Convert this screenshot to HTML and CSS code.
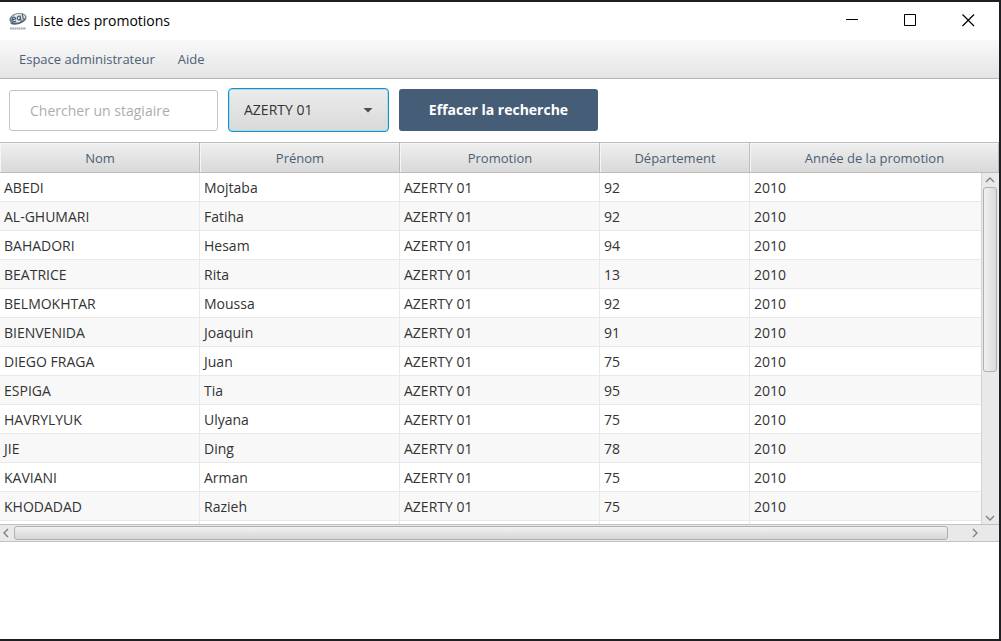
FILE: index.html
```html
<!DOCTYPE html>
<html lang="fr">
<head>
<meta charset="utf-8">
<meta name="viewport" content="width=device-width, initial-scale=1">
<title>Liste des promotions</title>
<link rel="stylesheet" href="styles.css">
</head>
<body>
<div class="window">
  <header class="titlebar">
    <svg class="logo" width="20" height="20" viewBox="0 0 20 20" aria-hidden="true">
      <g transform="rotate(-12 10 8)">
        <ellipse cx="10" cy="7.500" rx="8.800" ry="5.300" fill="#71808c"/>
        <ellipse cx="10.500" cy="7.300" rx="7" ry="4.200" fill="#e4e9ed"/>
        <path d="M4.500 7.500h3.200c.3-3-3.400-3-3.400.2 0 2.400 2.400 2.600 3.400 1.600M12.400 5.600c-3.400-1.400-4 3.800-1 3.600 1.200-.2 1.300-2 1.300-4v6M15.200 3.800v5.400" fill="none" stroke="#4a5e70" stroke-width="1.200"/>
        <path d="M2 10c3 3.500 11 3.500 15-1" fill="none" stroke="#4a5e70" stroke-width="1.300"/>
      </g>
      <path d="M2 17.500h16" stroke="#a4aab0" stroke-width="2" stroke-dasharray="1.800 .4"/>
    </svg>
    <h1 class="title">Liste des promotions</h1>
    <div class="window-buttons">
      <button class="window-button" aria-label="Réduire"><svg width="13" height="13" viewBox="0 0 13 13"><path d="M0 5.500h12" stroke="#000"/></svg></button>
      <button class="window-button" aria-label="Agrandir"><svg width="13" height="13" viewBox="0 0 13 13"><path d="M.5.500h11v11H.5z" fill="none" stroke="#000"/></svg></button>
      <button class="window-button" aria-label="Fermer"><svg width="13" height="13" viewBox="0 0 13 13"><path d="M.5.500l11.500 11.500M12 .5L.5 12" stroke="#000" stroke-width="1.200"/></svg></button>
    </div>
  </header>
  <nav class="menubar">
    <button class="menu">Espace administrateur</button>
    <button class="menu">Aide</button>
  </nav>
  <form class="toolbar">
    <input class="search" type="text" placeholder="Chercher un stagiaire" aria-label="Chercher un stagiaire">
    <div class="combo">
      <select class="combo-select" aria-label="Promotion"><option>AZERTY 01</option></select>
    </div>
    <button class="clear" type="button">Effacer la recherche</button>
  </form>
  <section class="listing">
    <div class="viewport">
      <table class="table">
        <colgroup><col class="col-wide"><col class="col-wide"><col class="col-wide"><col class="col-narrow"><col></colgroup>
        <thead><tr><th>Nom</th><th>Prénom</th><th>Promotion</th><th>Département</th><th>Année de la promotion</th></tr></thead>
        <tbody>
          <tr><td>ABEDI</td><td>Mojtaba</td><td>AZERTY 01</td><td>92</td><td>2010</td></tr>
          <tr><td>AL-GHUMARI</td><td>Fatiha</td><td>AZERTY 01</td><td>92</td><td>2010</td></tr>
          <tr><td>BAHADORI</td><td>Hesam</td><td>AZERTY 01</td><td>94</td><td>2010</td></tr>
          <tr><td>BEATRICE</td><td>Rita</td><td>AZERTY 01</td><td>13</td><td>2010</td></tr>
          <tr><td>BELMOKHTAR</td><td>Moussa</td><td>AZERTY 01</td><td>92</td><td>2010</td></tr>
          <tr><td>BIENVENIDA</td><td>Joaquin</td><td>AZERTY 01</td><td>91</td><td>2010</td></tr>
          <tr><td>DIEGO FRAGA</td><td>Juan</td><td>AZERTY 01</td><td>75</td><td>2010</td></tr>
          <tr><td>ESPIGA</td><td>Tia</td><td>AZERTY 01</td><td>95</td><td>2010</td></tr>
          <tr><td>HAVRYLYUK</td><td>Ulyana</td><td>AZERTY 01</td><td>75</td><td>2010</td></tr>
          <tr><td>JIE</td><td>Ding</td><td>AZERTY 01</td><td>78</td><td>2010</td></tr>
          <tr><td>KAVIANI</td><td>Arman</td><td>AZERTY 01</td><td>75</td><td>2010</td></tr>
          <tr><td>KHODADAD</td><td>Razieh</td><td>AZERTY 01</td><td>75</td><td>2010</td></tr>
          <tr class="partial"><td></td><td></td><td></td><td></td><td></td></tr>
        </tbody>
      </table>
      <div class="vscroll">
        <svg class="arrow" width="10" height="6" viewBox="0 0 10 6"><path d="M1 5l4-4 4 4"/></svg>
        <div class="vtrack"><div class="vthumb"></div></div>
        <svg class="arrow" width="10" height="6" viewBox="0 0 10 6"><path d="M1 1l4 4 4-4"/></svg>
      </div>
    </div>
    <div class="hscroll">
      <svg class="arrow" width="6" height="10" viewBox="0 0 6 10"><path d="M5 1L1 5l4 4"/></svg>
      <div class="htrack"><div class="hthumb"></div></div>
      <svg class="arrow" width="6" height="10" viewBox="0 0 6 10"><path d="M1 1l4 4-4 4"/></svg>
    </div>
  </section>
</div>
</body>
</html>
```

FILE: styles.css
```css
* { box-sizing: border-box; }

body {
  margin: 0;
  font-family: "Open Sans", "Noto Sans", sans-serif;
  font-size: 14px;
  line-height: 20px;
  color: #333;
}

button, input, select { font: inherit; margin: 0; }

.window {
  min-height: 100vh;
  background: #fff;
  border: solid #1e1e20;
  border-width: 2px 2px 2px 0;
}

.titlebar {
  display: flex;
  align-items: center;
  height: 38px;
  padding-left: 8px;
}
.logo { flex: none; margin-right: 5px; }
.title { margin: 0; font-size: 14px; font-weight: 400; color: #000; }
.window-buttons { display: flex; margin-left: auto; padding-right: 2px; }
.window-button {
  display: grid;
  place-items: center;
  width: 58px;
  height: 38px;
  padding: 0 0 2px;
  border: 0;
  background: none;
}

.menubar {
  display: flex;
  gap: 7px;
  padding: 9px 11px;
  border-bottom: 1px solid #b5b5b5;
  background: linear-gradient(#f9f9f9, #e4e4e4);
}
.menu { padding: 0 8px; border: 0; background: none; color: #4c6075; font-size: 13px; }

.toolbar {
  display: flex;
  align-items: center;
  gap: 10px;
  height: 63px;
  padding: 0 9px 1px;
}
.search {
  width: 209px;
  height: 41px;
  padding: 0 20px;
  border: 1px solid #c3c3c3;
  border-radius: 3px;
  color: #333;
}
.search::placeholder { color: #adadad; opacity: 1; }
.combo {
  display: grid;
  align-items: center;
  grid-template-columns: 1fr 26px;
  width: 161px;
}
.combo-select {
  grid-area: 1 / 1 / 2 / 3;
  height: 44px;
  padding: 0 15px;
  appearance: none;
  border: 1px solid #1693c0;
  border-radius: 4px;
  outline: 0;
  background: linear-gradient(#ececec, #d9d9d9);
  box-shadow: inset 0 0 0 1px #a9dcef;
  color: #333;
}
.combo::after {
  content: "";
  grid-area: 1 / 2;
  width: 10px;
  height: 5px;
  background: #4d4d4d;
  clip-path: polygon(0 0, 100% 0, 50% 100%);
  z-index: 1;
  pointer-events: none;
}
.clear {
  width: 199px;
  height: 42px;
  border: 0;
  border-radius: 3px;
  background: #455d76;
  color: #fff;
  font-weight: 700;
}

.viewport { position: relative; }
.table {
  width: 100%;
  table-layout: fixed;
  border-collapse: separate;
  border-spacing: 0;
}
.col-wide { width: 200px; }
.col-narrow { width: 150px; }
.table th {
  height: 31px;
  padding: 0 0 0 1px;
  border: solid #bcbcbc;
  border-width: 1px 1px 1px 0;
  background: linear-gradient(#efefef, #d9d9d9);
  box-shadow: inset 1px 1px 0 #f6f6f6;
  color: #4c6075;
  font-size: 13px;
  font-weight: 400;
}
.table td {
  height: 29px;
  padding: 2px 4px 0;
  border: solid #e9e9e9;
  border-width: 0 1px 1px 0;
}
.table tr:nth-child(even) td { background: #f8f8f8; }
.table .partial td { height: 3px; border-bottom: 0; }

.vscroll {
  position: absolute;
  top: 31px;
  right: 0;
  bottom: 0;
  width: 18px;
  display: flex;
  flex-direction: column;
  align-items: center;
  padding: 4px 2px 3px 1px;
  border-left: 1px solid #d4d4d4;
  background: #e9e9e9;
}
.arrow { flex: none; fill: none; stroke: #7d7d7d; stroke-width: 1.3px; }
.vtrack { flex: 1; width: 100%; padding: 4px 0; }
.vthumb {
  height: 57%;
  border: 1px solid #b0b0b0;
  border-radius: 3px;
  background: linear-gradient(90deg, #f1f1f1, #dadada);
}
.hscroll {
  display: flex;
  align-items: center;
  height: 18px;
  padding: 0 21px 0 3px;
  border: solid #c2c2c2;
  border-width: 1px 0;
  background: #e9e9e9;
}
.htrack { flex: 1; padding: 0 5px; }
.hthumb {
  width: 98%;
  height: 14px;
  border: 1px solid #b0b0b0;
  border-radius: 3px;
  background: linear-gradient(#f1f1f1, #d6d6d6);
}
```
